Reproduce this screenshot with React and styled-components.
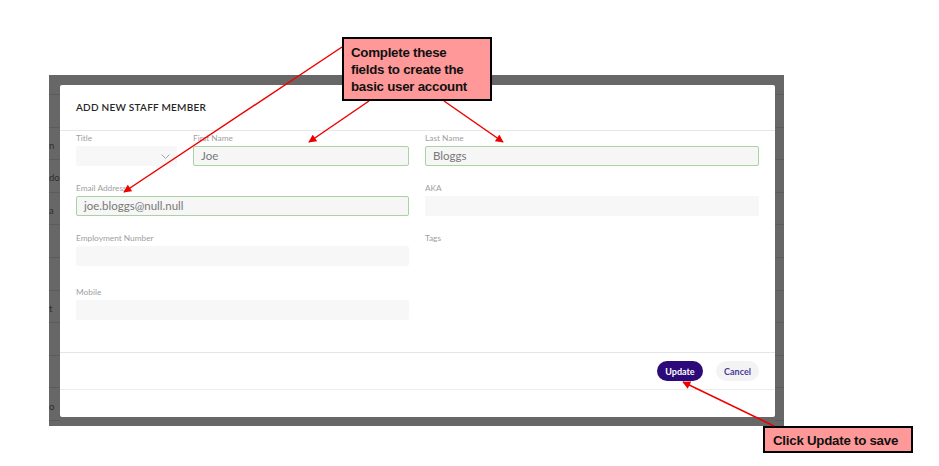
import React from "react";
import styled, { createGlobalStyle } from "styled-components";

const Global = createGlobalStyle`
  html, body { margin: 0; padding: 0; background: #ffffff; }
  body { font-family: "Lato", "Noto Sans", sans-serif; }
  * { box-sizing: border-box; }
`;

const Stage = styled.div`
  position: relative;
  width: 939px;
  height: 466px;
  overflow: hidden;
  padding: 75px 0 0 49px;
  background: #ffffff;
`;

const Backdrop = styled.div`
  width: 735px;
  height: 351px;
  background: #676767;
  display: grid;
  grid-template-columns: 11px 715px 9px;
  grid-template-rows: 10px 332px 9px;
`;

const Strip = styled.div`
  grid-row: 1 / 4;
  grid-column: ${(p) => p.$col};
  display: flex;
  flex-direction: column;
  overflow: hidden;
`;

const BgRow = styled.div`
  flex: none;
  height: ${(p) => (p.$first ? "20px" : "32.6px")};
  border-bottom: 1px solid #5c5c5c;
  display: flex;
  align-items: center;
  font-family: "Lato", sans-serif;
  font-size: 9.5px;
  color: #2e2e2e;
  white-space: nowrap;
  padding-top: 4px;
`;

const Modal = styled.div`
  grid-row: 2;
  grid-column: 2;
  background: #ffffff;
  border-radius: 2px;
  display: flex;
  flex-direction: column;
`;

const Header = styled.div`
  height: 46px;
  flex: none;
  border-bottom: 1px solid #e6e6e6;
  display: flex;
  align-items: center;
  padding: 0 16px;
  padding-bottom: 1px;
`;

const Title = styled.h2`
  margin: 0;
  font-family: "Lato", sans-serif;
  font-size: 10px;
  font-weight: 600;
  letter-spacing: 0.25px;
  color: #262626;
  text-transform: uppercase;
`;

const Body = styled.div`
  height: 221px;
  flex: none;
  padding: 2px 16px 0;
  display: grid;
  grid-template-columns: 333px 334px;
  column-gap: 16px;
  row-gap: 17px;
  align-content: start;
`;

const Split = styled.div`
  display: flex;
  gap: 16px;
`;

const Field = styled.div`
  display: flex;
  flex-direction: column;
  width: ${(p) => p.$w || "auto"};
  flex: ${(p) => (p.$w ? "none" : "1")};
`;

const Label = styled.label`
  font-size: 8.3px;
  line-height: 10px;
  height: 10px;
  margin-bottom: 3px;
  color: #a0a0a0;
  white-space: nowrap;
`;

const Input = styled.div`
  height: 20px;
  border-radius: 2px;
  background: ${(p) => (p.$valid ? "#f6f6f6" : "#f7f7f7")};
  border: 1px solid ${(p) => (p.$valid ? "#a9d4a2" : "#f7f7f7")};
  display: flex;
  align-items: center;
  padding: 0 7px 1px;
  font-size: 11.5px;
  color: #787878;
`;

const Select = styled(Input)`
  justify-content: flex-end;
  padding: 0 6px 0 0;
`;

const TagArea = styled.div`
  height: 24px;
`;

const Footer = styled.div`
  height: 38px;
  flex: none;
  border-top: 1px solid #e6e6e6;
  border-bottom: 1px solid #ececec;
  display: flex;
  justify-content: flex-end;
  align-items: center;
  gap: 13px;
  padding: 0 16px 0 0;
`;

const Button = styled.button`
  height: 20px;
  border: none;
  border-radius: 10px;
  padding: 0;
  width: ${(p) => (p.$primary ? "46px" : "43px")};
  background: ${(p) => (p.$primary ? "#2c0a7a" : "#f3f3f4")};
  color: ${(p) => (p.$primary ? "#ffffff" : "#4a3b98")};
  font-family: "Lato", sans-serif;
  font-size: 9px;
  font-weight: 700;
  display: flex;
  align-items: center;
  justify-content: center;
`;

const Callout = styled.div`
  position: absolute;
  left: ${(p) => p.$x}px;
  top: ${(p) => p.$y}px;
  width: ${(p) => p.$w}px;
  height: ${(p) => p.$h}px;
  background: #ff9999;
  border: 2px solid #000000;
  padding: ${(p) => p.$pad};
  font-family: "Liberation Sans", Arial, sans-serif;
  font-weight: 700;
  font-size: 13.3px;
  line-height: 17px;
  color: #111111;
  letter-spacing: -0.25px;
  white-space: nowrap;
  z-index: 2;
`;

const Arrows = styled.svg`
  position: absolute;
  left: 0;
  top: 0;
  width: 939px;
  height: 466px;
  pointer-events: none;
  z-index: 3;
`;

const Chevron = () => (
  <svg width="9" height="5" viewBox="0 0 9 5">
    <path d="M0.5 0.5 L4.5 4.5 L8.5 0.5" fill="none" stroke="#9a9a9a" strokeWidth="0.9" />
  </svg>
);

const leftFragments = ["", "", "n", "do", "a", "", "", "t", "", "", "o"];

export default function App() {
  return (
    <>
      <Global />
      <Stage>
        <Backdrop>
          <Strip $col={1}>
            {leftFragments.map((t, i) => (
              <BgRow key={i} $first={i === 0}>{t}</BgRow>
            ))}
          </Strip>
          <Modal>
            <Header>
              <Title>Add New Staff Member</Title>
            </Header>
            <Body>
              <Split>
                <Field $w="101px">
                  <Label>Title</Label>
                  <Select>
                    <Chevron />
                  </Select>
                </Field>
                <Field>
                  <Label>First Name</Label>
                  <Input $valid>Joe</Input>
                </Field>
              </Split>
              <Field>
                <Label>Last Name</Label>
                <Input $valid>Bloggs</Input>
              </Field>
              <Field>
                <Label>Email Address</Label>
                <Input $valid>joe.bloggs@null.null</Input>
              </Field>
              <Field>
                <Label>AKA</Label>
                <Input />
              </Field>
              <Field>
                <Label>Employment Number</Label>
                <Input />
              </Field>
              <Field>
                <Label>Tags</Label>
                <TagArea />
              </Field>
              <Field>
                <Label>Mobile</Label>
                <Input />
              </Field>
            </Body>
            <Footer>
              <Button $primary>Update</Button>
              <Button>Cancel</Button>
            </Footer>
          </Modal>
          <Strip $col={3}>
            {leftFragments.map((_, i) => (
              <BgRow key={i} $first={i === 0} />
            ))}
          </Strip>
        </Backdrop>

        <Callout $x={342} $y={37} $w={150} $h={64} $pad="5px 0 0 7px">
          Complete these
          <br />
          fields to create the
          <br />
          basic user account
        </Callout>
        <Callout $x={763} $y={426} $w={150} $h={27} $pad="4px 0 0 8px">
          Click Update to save
        </Callout>

        <Arrows viewBox="0 0 939 466">
          <defs>
            <marker id="head" viewBox="0 0 10 10" refX="9" refY="5" markerWidth="9" markerHeight="8" orient="auto-start-reverse" markerUnits="userSpaceOnUse">
              <path d="M0 0 L10 5 L0 10 Z" fill="#ee0000" />
            </marker>
          </defs>
          <g stroke="#ee0000" strokeWidth="1.5" fill="none">
            <line x1="342" y1="47" x2="124" y2="192" markerEnd="url(#head)" />
            <line x1="369" y1="101" x2="309" y2="142" markerEnd="url(#head)" />
            <line x1="444" y1="101" x2="503" y2="142" markerEnd="url(#head)" />
            <line x1="774" y1="426" x2="683" y2="382" markerEnd="url(#head)" />
          </g>
        </Arrows>
      </Stage>
    </>
  );
}
